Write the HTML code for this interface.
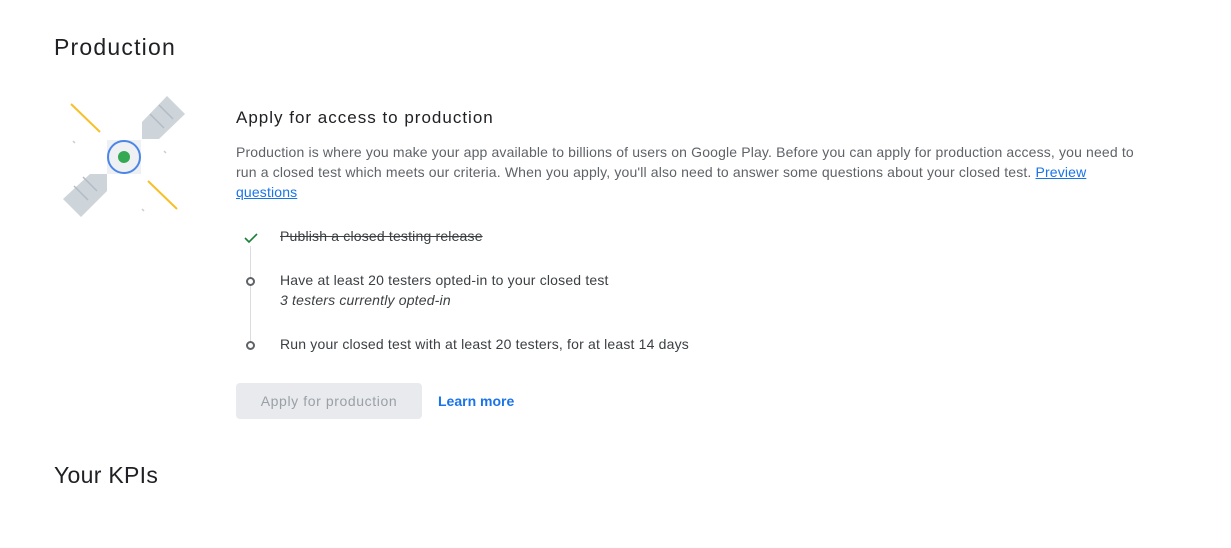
<!DOCTYPE html>
<html><head><style>
body{margin:0;width:1231px;height:548px;background:#fff;font-family:"Liberation Sans",Arial,sans-serif;position:relative;overflow:hidden}
.a{position:absolute}
h1{position:absolute;margin:0;font-weight:400;font-size:23px;color:#202124}
.p{color:#5f6368;font-size:14px;line-height:20px;letter-spacing:0.15px}
.it{color:#3c4043;font-size:14px;line-height:20px;letter-spacing:0.18px}
</style></head><body>
<h1 style="left:54px;top:34px;letter-spacing:1.2px">Production</h1>
<svg class="a" style="left:0;top:0" width="230" height="230">
<rect x="107" y="140" width="34" height="34" fill="#eef0f3"/>
<line x1="71" y1="104" x2="100" y2="132" stroke="#f6c026" stroke-width="2"/>
<line x1="148" y1="181" x2="177" y2="209" stroke="#f6c026" stroke-width="2"/>
<polygon points="167,96 185,114 159,139 142,139 142,122" fill="#cdd4da"/>
<line x1="150" y1="114" x2="164" y2="128" stroke="#b3bcc4" stroke-width="1.5"/>
<line x1="159" y1="105" x2="173" y2="119" stroke="#b3bcc4" stroke-width="1.5"/>
<polygon points="107,174 107,191 81,217 63,199 90,174" fill="#cdd4da"/>
<line x1="74" y1="186" x2="88" y2="200" stroke="#b3bcc4" stroke-width="1.5"/>
<line x1="83" y1="177" x2="97" y2="191" stroke="#b3bcc4" stroke-width="1.5"/>
<circle cx="124" cy="157" r="16" fill="none" stroke="#4a86e8" stroke-width="2"/>
<circle cx="124" cy="157" r="6" fill="#34a853"/>
<line x1="73" y1="141" x2="75" y2="143" stroke="#c8ced4" stroke-width="1.5"/>
<line x1="164" y1="151" x2="166" y2="153" stroke="#c8ced4" stroke-width="1.5"/>
<line x1="142" y1="209" x2="144" y2="211" stroke="#c8ced4" stroke-width="1.5"/>
</svg>
<div class="a" style="left:236px;top:108px;font-size:17px;color:#202124;letter-spacing:1px">Apply for access to production</div>
<div class="a p" style="left:236px;top:142px;width:900px">Production is where you make your app available to billions of users on Google Play. Before you can apply for production access, you need to run a closed test which meets our criteria. When you apply, you'll also need to answer some questions about your closed test. <span style="color:#1a73e8;text-decoration:underline">Preview questions</span></div>
<div class="a" style="left:250px;top:246px;width:1px;height:96px;background:#dadce0"></div>
<svg class="a" style="left:243px;top:230px" width="16" height="16"><path d="M2 8 L6 12 L14 4" fill="none" stroke="#188038" stroke-width="1.6"/></svg>
<div class="a it" style="left:280px;top:226px;text-decoration:line-through">Publish a closed testing release</div>
<div class="a" style="left:246px;top:277px;width:5px;height:5px;border:2px solid #5f6368;border-radius:50%;background:#fff"></div>
<div class="a it" style="left:280px;top:270px">Have at least 20 testers opted-in to your closed test<br><i>3 testers currently opted-in</i></div>
<div class="a" style="left:246px;top:341px;width:5px;height:5px;border:2px solid #5f6368;border-radius:50%;background:#fff"></div>
<div class="a it" style="left:280px;top:334px">Run your closed test with at least 20 testers, for at least 14 days</div>
<div class="a" style="left:236px;top:383px;width:186px;height:36px;background:#e8eaed;border-radius:4px;color:#9aa0a6;font-size:14px;line-height:36px;text-align:center;letter-spacing:0.6px">Apply for production</div>
<div class="a" style="left:438px;top:383px;line-height:36px;font-size:14px;color:#1a73e8;font-weight:bold">Learn more</div>
<h1 style="left:54px;top:462px;letter-spacing:0.3px">Your KPIs</h1>
</body></html>
